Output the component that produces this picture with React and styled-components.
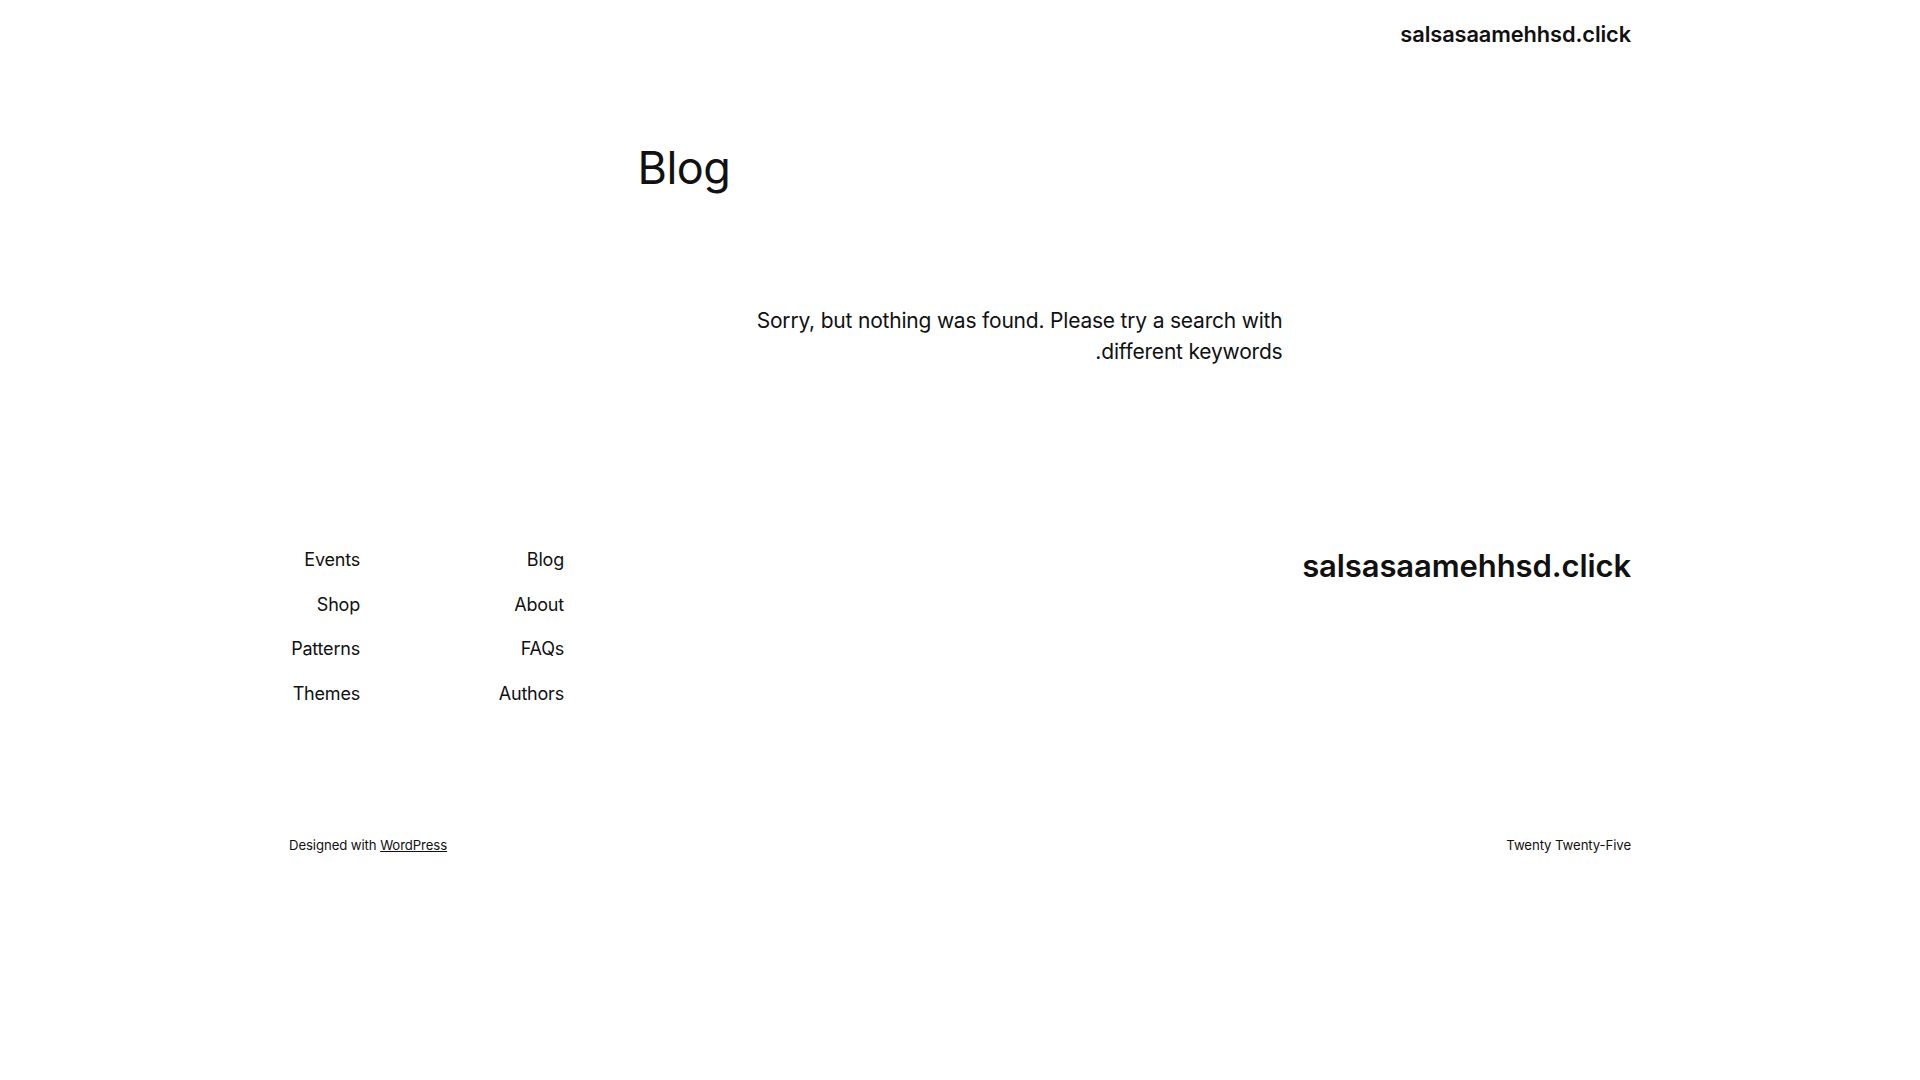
import React from 'react'
import styled, { createGlobalStyle } from 'styled-components'

const GlobalStyle = createGlobalStyle`
html, body {
    margin: 0;
    padding: 0;
    background: #ffffff;
}
body {
    font-family: "Inter", "Noto Sans", sans-serif;
    color: #111111;
    -webkit-font-smoothing: antialiased;
}
a {
    color: inherit;
}
`

const Page = styled.div`
direction: rtl;
min-height: 1080px;
display: flex;
flex-direction: column;
`

const Wide = styled.div`
width: 1342px;
margin: 0 auto;
`

const Header = styled(Wide)`
display: flex;
justify-content: flex-start;
padding-top: 21px;
`

const SiteTitle = styled.a`
font-size: ${props => props.$size}px;
font-weight: 600;
line-height: 1.2;
letter-spacing: -0.1px;
text-decoration: none;
`

const Main = styled.main`
width: 645px;
margin: 0 auto;
padding-top: 94px;
`

const PageTitle = styled.h1`
margin: 0;
font-size: 45px;
font-weight: 400;
line-height: 53px;
letter-spacing: -0.5px;
text-align: left;
`

const Notice = styled.p`
margin: 112px 0 0;
font-size: 21px;
font-weight: 400;
line-height: 30.6px;
letter-spacing: -0.2px;
text-align: right;
`

const Footer = styled(Wide)`
margin-top: 180px;
`

const FooterTop = styled.div`
display: flex;
justify-content: space-between;
align-items: flex-start;
`

const NavGrid = styled.nav`
display: grid;
grid-template-columns: 204px 71px;
`

const NavColumn = styled.ul`
list-style: none;
margin: 0;
padding: 0;
display: flex;
flex-direction: column;
gap: 18.5px;
white-space: nowrap;
`

const NavItem = styled.li`
font-size: 18px;
line-height: 26px;
font-weight: 400;
letter-spacing: -0.2px;
`

const FooterBottom = styled.div`
display: flex;
justify-content: space-between;
align-items: center;
margin-top: 128px;
font-size: 13.2px;
line-height: 20px;
letter-spacing: -0.1px;
`

const Credit = styled.p`
margin: 0;
`

const columns = [
    ['Blog', 'About', 'FAQs', 'Authors'],
    ['Events', 'Shop', 'Patterns', 'Themes'],
]

const App = () => {
    return (
        <>
            <GlobalStyle />
            <Page>
                <Header as="header">
                    <SiteTitle href="#" $size={21.8}>salsasaamehhsd.click</SiteTitle>
                </Header>
                <Main>
                    <PageTitle>Blog</PageTitle>
                    <Notice>
                        Sorry, but nothing was found. Please try a search with<br />
                        different keywords.
                    </Notice>
                </Main>
                <Footer as="footer">
                    <FooterTop>
                        <SiteTitle href="#" $size={31}>salsasaamehhsd.click</SiteTitle>
                        <NavGrid>
                            {columns.map((col, i) => (
                                <NavColumn key={i}>
                                    {col.map(item => (
                                        <NavItem key={item}>{item}</NavItem>
                                    ))}
                                </NavColumn>
                            ))}
                        </NavGrid>
                    </FooterTop>
                    <FooterBottom>
                        <Credit>Twenty Twenty-Five</Credit>
                        <Credit>Designed with <a href="#">WordPress</a></Credit>
                    </FooterBottom>
                </Footer>
            </Page>
        </>
    )
}

export default App
